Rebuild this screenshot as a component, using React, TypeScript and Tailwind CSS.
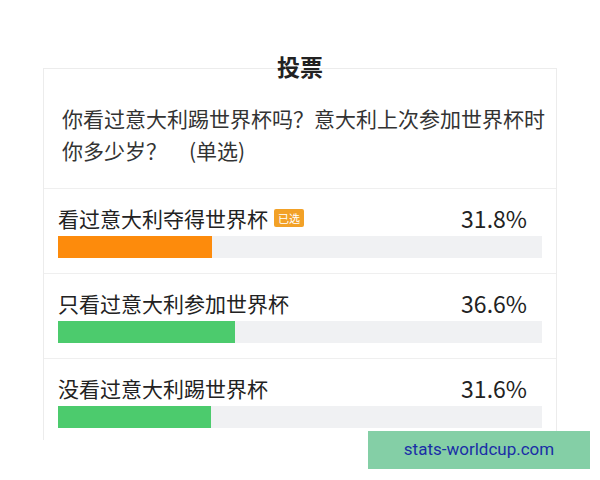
const font = { fontFamily: '"Noto Sans CJK SC", "Noto Sans", sans-serif' };

type Option = { label: string; pct: number; selected?: boolean };

const options: Option[] = [
  { label: "看过意大利夺得世界杯", pct: 31.8, selected: true },
  { label: "只看过意大利参加世界杯", pct: 36.6 },
  { label: "没看过意大利踢世界杯", pct: 31.6 },
];

function OptionRow({ opt, last }: { opt: Option; last: boolean }) {
  return (
    <div className={`px-[14px] pt-[15px] ${last ? "pb-[12px]" : "pb-[15px] border-b border-[#efefef]"}`}>
      <div className="flex items-center h-[28px] pr-[15px]">
        <span className="text-[21px] leading-[28px] text-[#222]">{opt.label}</span>
        {opt.selected && (
          <span className="ml-[6px] px-[4px] h-[18px] leading-[18px] rounded-[2px] bg-[#f2a127] text-white text-[11px]">
            已选
          </span>
        )}
        <span className="ml-auto text-[23px] leading-[28px] text-[#222]">{opt.pct}%</span>
      </div>
      <div className="mt-[4px] h-[22px] bg-[#f0f1f3]">
        <div
          className={`h-full ${opt.selected ? "bg-[#fd8b0c]" : "bg-[#4ccb6d]"}`}
          style={{ width: `${opt.pct}%` }}
        />
      </div>
    </div>
  );
}

export default function App() {
  return (
    <div className="relative w-[600px] h-[480px] bg-white overflow-hidden" style={font}>
      <div className="pt-[51px] px-[43px]">
        {/* Title */}
        <div className="relative z-10 text-center text-[23px] leading-[30px] font-bold text-[#222]">投票</div>

        {/* Card */}
        <div className="-mt-[13px] w-[514px] border-x border-t border-[#ececec]">
          <div className="pl-[18px] pt-[33px] pb-[22px] text-[21px] leading-[32px] text-[#333]">
            你看过意大利踢世界杯吗？意大利上次参加世界杯时
            <br />
            你多少岁？<span className="ml-[22px]">(单选)</span>
          </div>
          <div className="border-t border-[#efefef]">
            {options.map((o, i) => (
              <OptionRow key={o.label} opt={o} last={i === options.length - 1} />
            ))}
          </div>
        </div>
      </div>

      {/* Watermark */}
      <div className="absolute left-[368px] top-[431px] w-[222px] h-[38px] bg-[#84cfa6] flex items-center justify-center">
        <span className="text-[17px] text-[#1a2ea6]" style={{ fontFamily: 'Roboto, sans-serif' }}>
          stats-worldcup.com
        </span>
      </div>
    </div>
  );
}
